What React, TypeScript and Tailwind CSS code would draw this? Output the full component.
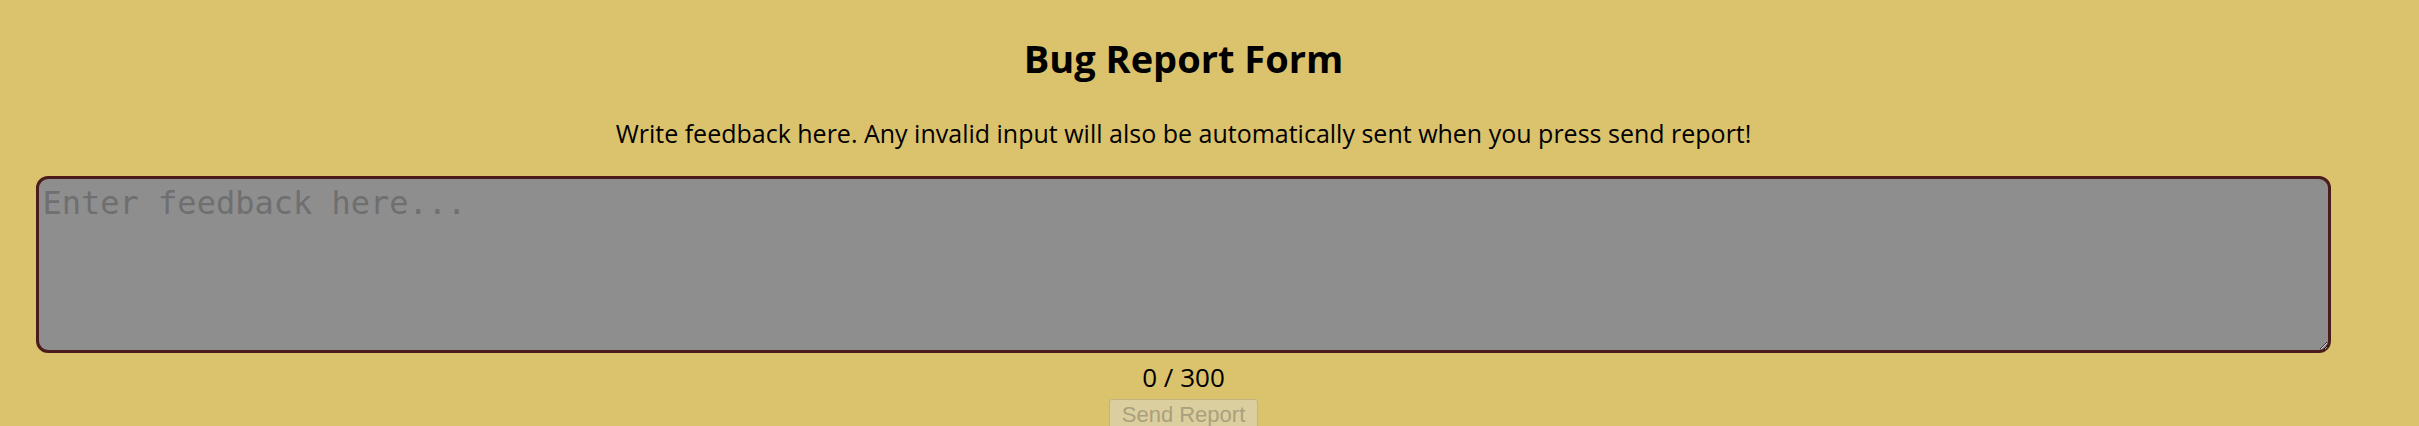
import { useState } from "react";

const MAX = 300;

export default function App() {
  const [text, setText] = useState("");

  return (
    <div className="min-h-[426px] w-full bg-[#dbc26c] overflow-hidden">
      <div className="w-[2367px] flex flex-col items-center font-['Open_Sans',sans-serif] text-black">
        <h1 className="mt-[34px] text-[38px] leading-[48px] font-bold">Bug Report Form</h1>
        <p className="mt-[35px] text-[25px] leading-[33px]">
          Write feedback here. Any invalid input will also be automatically sent when you press send report!
        </p>
        <textarea
          autoFocus
          value={text}
          maxLength={MAX}
          onChange={(e) => setText(e.target.value)}
          placeholder="Enter feedback here..."
          className="mt-[26px] w-[97%] h-[177px] bg-[#8e8e8e] border-[3px] border-[#4b1c1c] rounded-[12px] pl-[4px] pr-[4px] pt-[6px] resize-y font-['DejaVu_Sans_Mono',monospace] text-[32px] leading-[37px] text-black placeholder:text-[#6f6f6f] outline-none"
        />
        <div className="mt-[8px] text-[26px] leading-[33px]">
          {text.length} / {MAX}
        </div>
        <button
          disabled={text.length === 0}
          className="mt-[5px] px-[12px] py-[2px] border border-[#c4b382] rounded-[3px] bg-[#dccf9f] text-[#a9a07e] font-['Liberation_Sans',Arial,sans-serif] text-[22px] leading-[26px]"
        >
          Send Report
        </button>
      </div>
    </div>
  );
}
